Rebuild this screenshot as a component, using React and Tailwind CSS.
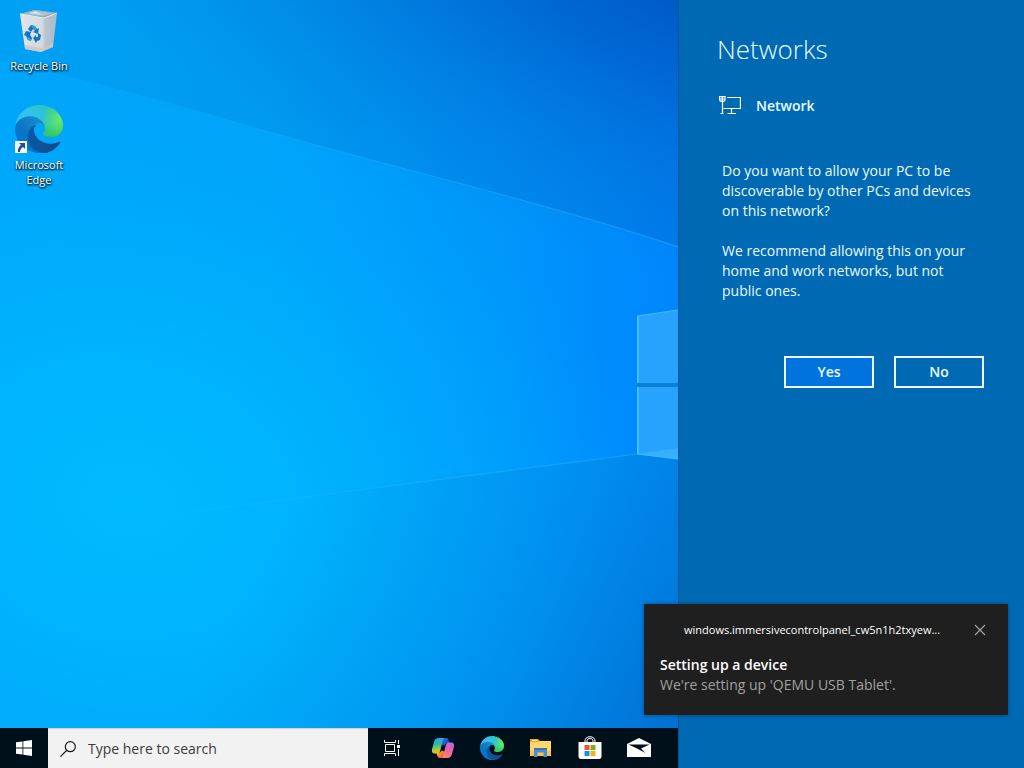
import React from "react";

function Wallpaper() {
  return (
    <svg
      className="absolute inset-0 h-full w-full"
      viewBox="0 0 678 768"
      preserveAspectRatio="xMaxYMid slice"
      aria-hidden="true"
    >
      <defs>
        <linearGradient id="wpBase" x1="0" y1="0" x2="678" y2="0" gradientUnits="userSpaceOnUse">
          <stop offset="0" stopColor="#00a6fa" />
          <stop offset="0.4" stopColor="#00a4f9" />
          <stop offset="0.75" stopColor="#0096fb" />
          <stop offset="1" stopColor="#0086fd" />
        </linearGradient>
        <radialGradient id="wpCyan" cx="0" cy="0" r="1" gradientUnits="userSpaceOnUse" gradientTransform="translate(130 500) rotate(12) scale(520 420)">
          <stop offset="0" stopColor="#00baff" />
          <stop offset="0.35" stopColor="#00b6fd" stopOpacity="0.85" />
          <stop offset="0.7" stopColor="#00aeff" stopOpacity="0.4" />
          <stop offset="1" stopColor="#00a6ff" stopOpacity="0" />
        </radialGradient>
        <radialGradient id="wpTop" cx="0" cy="0" r="1" gradientUnits="userSpaceOnUse" gradientTransform="translate(700 -10) rotate(16) scale(720 290)">
          <stop offset="0" stopColor="#0052c2" />
          <stop offset="0.3" stopColor="#0064d0" stopOpacity="0.85" />
          <stop offset="0.65" stopColor="#0078dc" stopOpacity="0.45" />
          <stop offset="1" stopColor="#0084e0" stopOpacity="0" />
        </radialGradient>
        <linearGradient id="wpShade" x1="0" y1="0" x2="678" y2="0" gradientUnits="userSpaceOnUse">
          <stop offset="0" stopColor="#0080d0" stopOpacity="0.15" />
          <stop offset="1" stopColor="#0060cc" stopOpacity="0.3" />
        </linearGradient>
        <linearGradient id="wpLow" x1="310" y1="470" x2="700" y2="690" gradientUnits="userSpaceOnUse">
          <stop offset="0" stopColor="#009ce8" stopOpacity="0" />
          <stop offset="0.5" stopColor="#008ee8" stopOpacity="0.55" />
          <stop offset="1" stopColor="#0070d2" />
        </linearGradient>
        <linearGradient id="wpRay" x1="120" y1="0" x2="678" y2="0" gradientUnits="userSpaceOnUse">
          <stop offset="0" stopColor="#3cc0ff" stopOpacity="0" />
          <stop offset="0.5" stopColor="#30b8ff" stopOpacity="0.35" />
          <stop offset="1" stopColor="#30b4ff" stopOpacity="0.5" />
        </linearGradient>
      </defs>
      <rect x="-2000" y="-1000" width="2678" height="2768" fill="#00a6fa" />
      <rect width="678" height="768" fill="url(#wpBase)" />
      <rect width="678" height="768" fill="url(#wpCyan)" />
      <rect width="678" height="768" fill="url(#wpTop)" />
      <path d="M0 60 Q120 88 207 114 T432 176 T678 247V0H0Z" fill="url(#wpShade)" />
      <path d="M0 535 637 454 678 459V768H0Z" fill="url(#wpLow)" />
      <path d="M80 80Q150 96 207 114 T432 176 T678 247" fill="none" stroke="url(#wpRay)" strokeWidth="1.2" />
      <path d="M120 521 637 454" fill="none" stroke="url(#wpRay)" strokeWidth="1.2" />
      <path d="M637 316 678 310V383H637Z" fill="#27a3fd" />
      <path d="M637 387H678V459L637 454Z" fill="#27a3fd" />
      <path d="M637 454 678 448V459Z" fill="#45b6ff" opacity=".6" />
      <path d="M637 383H678V387H637Z" fill="#0880d8" />
      <path d="M637.8 316V383M637.8 387V454" stroke="#44caff" strokeWidth="1.6" />
      <path d="M637 316 678 310M637 454 678 459" stroke="#40bcff" strokeWidth="1" />
    </svg>
  );
}

function RecycleBinIcon() {
  return (
    <svg className="h-12 w-12" viewBox="0 0 48 48" aria-hidden="true">
      <defs>
        <linearGradient id="binBody" x1="0" y1="0" x2="1" y2="0">
          <stop offset="0" stopColor="#dfe5ea" />
          <stop offset="0.6" stopColor="#d3dae0" />
          <stop offset="0.68" stopColor="#b9c5ce" />
          <stop offset="1" stopColor="#a9bac7" />
        </linearGradient>
      </defs>
      <path d="M5 8 20 4 42 7 38 41 26 46 10 43Z" fill="url(#binBody)" />
      <path d="M5 8 20 4 42 7 29 12Z" fill="#8fa9ba" />
      <path d="M9 8 20 5 38 7 28 10Z" fill="#b0c5d1" />
      <path d="M14 7 21 5 27 9Z" fill="#d3e0e7" />
      <path d="M5 8 29 12 42 7" fill="none" stroke="#e4edf1" strokeWidth="1" />
      <path d="M10 39 26 42 38 37 38 41 26 46 10 43Z" fill="#cfc4be" opacity=".8" />
      <g fill="#1275c4">
        <path d="M13 23 16 19 20 20 22 23 24 22 23 28 18 26 20 25 18 23 16 26Z" />
        <path d="M11 25 16 26 15 29 17 32 16 35 13 34 11 30 9 29Z" />
        <path d="M18 32 21 29 21 31 23 31 23 27 26 29 25 34 22 35 21 37Z" />
      </g>
      <path d="M16 19 20 20 22 23 20 24 17 21ZM11 30 13 34 16 35 16 33Z" fill="#38a2dc" />
    </svg>
  );
}

function EdgeLogo({ id, className }) {
  return (
    <svg className={className} viewBox="0 0 256 256" aria-hidden="true">
      <defs>
        <linearGradient id={id + "a"} x1="63" y1="177" x2="241" y2="177" gradientUnits="userSpaceOnUse">
          <stop offset="0" stopColor="#0c59a4" />
          <stop offset="1" stopColor="#114a8b" />
        </linearGradient>
        <linearGradient id={id + "b"} x1="146" y1="92" x2="43" y2="220" gradientUnits="userSpaceOnUse">
          <stop offset="0" stopColor="#1b8ad2" />
          <stop offset="0.16" stopColor="#1583cc" />
          <stop offset="0.67" stopColor="#0674c8" />
          <stop offset="1" stopColor="#0078d4" />
        </linearGradient>
        <radialGradient id={id + "c"} cx="0" cy="0" r="1" gradientUnits="userSpaceOnUse" gradientTransform="translate(26 47) rotate(92) scale(202 431)">
          <stop offset="0" stopColor="#35c1f1" />
          <stop offset="0.11" stopColor="#34c1ed" />
          <stop offset="0.23" stopColor="#2fc2df" />
          <stop offset="0.31" stopColor="#2bc3d2" />
          <stop offset="0.67" stopColor="#36c752" />
        </radialGradient>
        <radialGradient id={id + "d"} cx="240" cy="78" r="97" gradientUnits="userSpaceOnUse">
          <stop offset="0" stopColor="#66eb6e" />
          <stop offset="1" stopColor="#66eb6e" stopOpacity="0" />
        </radialGradient>
      </defs>
      <path fill={"url(#" + id + "a)"} d="M235.7 195.5a93.7 93.7 0 0 1-10.6 4.7 101.9 101.9 0 0 1-35.9 6.4c-47.3 0-88.5-32.5-88.5-74.3a31.5 31.5 0 0 1 16.4-27.3c-42.8 1.8-53.8 46.4-53.8 72.5 0 74 68.1 81.4 82.8 81.4 7.9 0 19.8-2.3 27-4.6l1.3-.4a128.3 128.3 0 0 0 66.6-52.8 4 4 0 0 0-5.3-5.6z" />
      <path fill={"url(#" + id + "b)"} d="M105.7 241.4a79.2 79.2 0 0 1-22.7-21.3 80.7 80.7 0 0 1 29.5-120c3.2-1.5 8.5-4.1 15.6-4a32.4 32.4 0 0 1 25.7 13 31.9 31.9 0 0 1 6.3 18.7c0-.2 24.5-79.6-80-79.6-43.9 0-80 41.7-80 78.2a130.2 130.2 0 0 0 12.1 56 128 128 0 0 0 156.4 67 75.5 75.5 0 0 1-62.8-8z" />
      <path fill={"url(#" + id + "c)"} d="M152.3 148.9c-.9 1-3.4 2.5-3.4 5.6 0 2.6 1.7 5.2 4.8 7.3 14.4 10 41.5 8.7 41.6 8.7a59.6 59.6 0 0 0 30.3-8.3 61.4 61.4 0 0 0 30.4-52.9c.3-22.4-8-37.3-11.3-43.9C223.5 23.9 177.7 0 128 0A128 128 0 0 0 0 126.2c.5-36.5 36.8-66 80-66 3.5 0 23.5.3 42 10a72.6 72.6 0 0 1 30.9 29.3c6.1 10.6 7.2 24.1 7.2 29.5s-2.7 13.3-7.8 19.9z" />
      <path fill={"url(#" + id + "d)"} d="M152.3 148.9c-.9 1-3.4 2.5-3.4 5.6 0 2.6 1.7 5.2 4.8 7.3 14.4 10 41.5 8.7 41.6 8.7a59.6 59.6 0 0 0 30.3-8.3 61.4 61.4 0 0 0 30.4-52.9c.3-22.4-8-37.3-11.3-43.9C223.5 23.9 177.7 0 128 0A128 128 0 0 0 0 126.2c.5-36.5 36.8-66 80-66 3.5 0 23.5.3 42 10a72.6 72.6 0 0 1 30.9 29.3c6.1 10.6 7.2 24.1 7.2 29.5s-2.7 13.3-7.8 19.9z" />
    </svg>
  );
}

function DesktopIcon({ label, children }) {
  return (
    <button
      type="button"
      className="flex w-[76px] flex-col items-center px-1 text-center text-[11px] leading-[15px] font-medium text-white [text-shadow:0_1px_2px_#000,1px_1px_2px_#000c]"
    >
      {children}
      <span className="mt-1">{label}</span>
    </button>
  );
}

function WindowsIcon() {
  return (
    <svg className="h-4 w-4" viewBox="0 0 16 16" fill="#fff" aria-hidden="true">
      <path d="M0 2.3 6.5 1.4V7.6H0ZM7.3 1.3 16 0V7.6H7.3ZM0 8.4H6.5V14.6L0 13.7ZM7.3 8.4H16V16L7.3 14.7Z" />
    </svg>
  );
}

function SearchIcon() {
  return (
    <svg className="h-4 w-4 shrink-0" viewBox="0 0 16 16" fill="none" stroke="#1c1c1c" strokeWidth="1.2" aria-hidden="true">
      <circle cx="10.3" cy="5.7" r="5" />
      <path d="M6.8 9.3.4 15.6" />
    </svg>
  );
}

function TaskViewIcon() {
  return (
    <svg className="h-4 w-4" viewBox="0 0 16 16" fill="none" stroke="#fff" strokeWidth="1" aria-hidden="true">
      <path d="M.5 0V2.5H11.5V0M.5 16V13.5H11.5V16M1.5 4.5H10.5V11.5H1.5ZM14.5 0V4M14.5 9V16" />
      <path d="M13 5H16V8H13Z" fill="#fff" stroke="none" />
    </svg>
  );
}

function CopilotIcon() {
  return (
    <svg className="h-6 w-6" viewBox="0 0 24 24" aria-hidden="true">
      <defs>
        <linearGradient id="coL" x1="4" y1="2" x2="6" y2="18" gradientUnits="userSpaceOnUse">
          <stop offset="0" stopColor="#22a7f2" />
          <stop offset="0.4" stopColor="#2bb7b0" />
          <stop offset="0.7" stopColor="#a5c63c" />
          <stop offset="1" stopColor="#f7c320" />
        </linearGradient>
        <linearGradient id="coR" x1="20" y1="6" x2="12" y2="22" gradientUnits="userSpaceOnUse">
          <stop offset="0" stopColor="#a66cf0" />
          <stop offset="0.45" stopColor="#ec5fa8" />
          <stop offset="1" stopColor="#ff8a62" />
        </linearGradient>
        <linearGradient id="coT" x1="11" y1="2" x2="18" y2="7" gradientUnits="userSpaceOnUse">
          <stop offset="0" stopColor="#2277e6" />
          <stop offset="1" stopColor="#2446b8" />
        </linearGradient>
        <linearGradient id="coB" x1="6" y1="16" x2="12" y2="22" gradientUnits="userSpaceOnUse">
          <stop offset="0" stopColor="#ffb02e" />
          <stop offset="1" stopColor="#f0533d" />
        </linearGradient>
      </defs>
      <path d="M8 2H15C17 2 17.500 3.500 18 5L18.600 7.500H16C14.500 7.500 13.800 8.500 13.500 9.500L9 8Z" fill="url(#coT)" />
      <path d="M16 22H9C7 22 6.500 20.500 6 19L5.400 16.500H8C9.500 16.500 10.200 15.500 10.500 14.500L15 16Z" fill="url(#coB)" />
      <path d="M8 2H13.500C12.300 2.600 11.900 4 11.400 6L9.400 14C8.900 16 8 17.500 6 17.500H3.500C1 17.500 .5 15 1.200 12.500L3 6C3.700 3.500 5 2 8 2Z" fill="url(#coL)" />
      <path d="M16 22H10.500C11.700 21.400 12.100 20 12.600 18L14.600 10C15.100 8 16 6.500 18 6.500H20.500C23 6.500 23.500 9 22.800 11.500L21 18C20.300 20.500 19 22 16 22Z" fill="url(#coR)" />
    </svg>
  );
}

function ExplorerIcon() {
  return (
    <svg className="h-6 w-6" viewBox="0 0 24 24" aria-hidden="true">
      <path d="M1 3H9L11 5H22V20H1Z" fill="#e9a823" />
      <path d="M1 6H9L11 5H22V20H1Z" fill="#ffd66b" />
      <path d="M3 4H8V5H3Z" fill="#fff1b8" />
      <path d="M1 15H22V20H1Z" fill="#f8c54c" />
      <path d="M5 21V13C5 12.400 5.400 12 6 12H17C17.600 12 18 12.400 18 13V21H14.500V16.500H8.500V21Z" fill="#4a8fd6" />
      <path d="M5 12H18V14H5Z" fill="#3376c0" />
    </svg>
  );
}

function StoreIcon() {
  return (
    <svg className="h-6 w-6" viewBox="0 0 24 24" aria-hidden="true">
      <path d="M7 7V5C7 2.500 9 .7 12 .7S17 2.500 17 5V7M9 7V5C9 3.500 10 2.500 12 2.500S15 3.500 15 5V7" fill="none" stroke="#fff" strokeWidth="1" />
      <path d="M.5 6H23.500V20.500C23.500 22 22.500 23 21 23H3C1.500 23 .5 22 .5 20.500Z" fill="#fff" />
      <path d="M6.500 9H11.500V14H6.500Z" fill="#e8542c" />
      <path d="M12.500 9H17.500V14H12.500Z" fill="#7fae1c" />
      <path d="M6.500 15H11.500V20H6.500Z" fill="#1694dc" />
      <path d="M12.500 15H17.500V20H12.500Z" fill="#f5b011" />
    </svg>
  );
}

function MailIcon() {
  return (
    <svg className="h-6 w-6" viewBox="0 0 24 24" aria-hidden="true">
      <path d="M0 8 12 2 24 8V21H0Z" fill="#fff" />
      <path d="M1.500 8.500H22.500L14 12.500 18.500 17 10 12.500Z" fill="#00101a" />
    </svg>
  );
}

function NetworkIcon() {
  return (
    <svg className="h-[22px] w-[22px] shrink-0" viewBox="0 0 22 22" fill="none" stroke="#fff" strokeWidth="1.200" aria-hidden="true">
      <path d="M8 2.500H21.400V13.500H4.500M12.500 13.500V18.500M8.500 18.500H17" />
      <path d="M.6 1V4.500C.6 6 1.500 6.500 3.300 6.500S6 6 6 4.500V1M3.300 1V6.500M.6 1.600H6M3.500 6.500V19M1.500 18.500H4.500M.6 4H6" />
    </svg>
  );
}

function TaskButton({ label, children }) {
  return (
    <button type="button" aria-label={label} className="flex h-10 w-[49px] items-center justify-center">
      {children}
    </button>
  );
}

function Taskbar() {
  return (
    <nav aria-label="Taskbar" className="relative flex h-10 items-center bg-[#00101a]">
      <button type="button" aria-label="Start" className="flex h-10 w-12 items-center justify-center">
        <WindowsIcon />
      </button>
      <label className="flex h-10 w-80 items-center gap-3 border-t border-[#d2d6d8] bg-[#f2f2f2] px-3">
        <SearchIcon />
        <input
          type="text"
          aria-label="Type here to search"
          placeholder="Type here to search"
          className="min-w-0 flex-1 bg-transparent text-sm text-[#333] outline-none placeholder:text-[#3c3c3c]"
        />
      </label>
      <button type="button" aria-label="Task View" className="mr-0.5 flex h-10 w-12 items-center justify-center">
        <TaskViewIcon />
      </button>
      <TaskButton label="Copilot"><CopilotIcon /></TaskButton>
      <TaskButton label="Microsoft Edge"><EdgeLogo id="edgeBar" className="h-6 w-6" /></TaskButton>
      <TaskButton label="File Explorer"><ExplorerIcon /></TaskButton>
      <TaskButton label="Microsoft Store"><StoreIcon /></TaskButton>
      <TaskButton label="Mail"><MailIcon /></TaskButton>
    </nav>
  );
}

function NetworkPanel() {
  return (
    <aside className="w-[346px] shrink-0 border-l border-[#00559c] bg-[#0069b4] pr-10 pl-[38px] text-[#eafaff]">
      <h1 className="pt-[31px] text-[26px] leading-9 font-light">Networks</h1>
      <div className="mt-7 flex items-center gap-[15px] pl-0.5">
        <NetworkIcon />
        <h2 className="text-sm leading-5 font-semibold">Network</h2>
      </div>
      <div className="mt-11 space-y-5 pl-[5px] text-sm leading-5">
        <p>
          Do you want to allow your PC to be<br />
          discoverable by other PCs and devices<br />
          on this network?
        </p>
        <p>
          We recommend allowing this on your<br />
          home and work networks, but not<br />
          public ones.
        </p>
      </div>
      <div className="mt-[55px] flex justify-end gap-5 text-sm font-semibold">
        <button type="button" className="h-8 w-[90px] border-2 border-[#eafaff] bg-[#0073de]">Yes</button>
        <button type="button" className="h-8 w-[90px] border-2 border-[#eafaff]">No</button>
      </div>
    </aside>
  );
}

function Toast() {
  return (
    <section
      role="status"
      className="absolute right-4 bottom-[53px] w-[364px] bg-[#1f1f1f] px-4 pt-4 pb-5 text-sm leading-5 shadow-[0_0_4px_#0006]"
    >
      <header className="flex items-center justify-between pr-[5px] pl-6">
        <span className="text-[11px] text-white">windows.immersivecontrolpanel_cw5n1h2txyew...</span>
        <button type="button" aria-label="Close" className="p-px">
          <svg className="h-3 w-3" viewBox="0 0 12 12" stroke="#a8a8a8" strokeWidth="1.100" aria-hidden="true">
            <path d="M1 1 11 11M11 1 1 11" />
          </svg>
        </button>
      </header>
      <h2 className="mt-[15px] font-semibold text-white">Setting up a device</h2>
      <p className="text-[#a0a0a0]">We're setting up 'QEMU USB Tablet'.</p>
    </section>
  );
}

export default function App() {
  return (
    <div className="relative flex min-h-screen overflow-hidden font-['Open_Sans','Noto_Sans',sans-serif]">
      <main className="relative flex min-w-0 flex-1 flex-col justify-between overflow-hidden bg-[#00a6fa]">
        <Wallpaper />
        <div className="relative flex flex-col gap-8 pt-1.5 pl-px">
          <DesktopIcon label="Recycle Bin">
            <RecycleBinIcon />
          </DesktopIcon>
          <DesktopIcon label="Microsoft Edge">
            <span className="relative">
              <EdgeLogo id="edgeDesk" className="h-12 w-12" />
              <svg className="absolute bottom-0 left-0 h-3 w-3" viewBox="0 0 12 12" aria-hidden="true">
                <path d="M0 0H12V12H0Z" fill="#f4f6f8" />
                <path d="M4 2H10V8L8 6C6 7.500 5 8.500 5 11H3C2.500 8 4 5.500 6 4Z" fill="#1c4f94" />
              </svg>
            </span>
          </DesktopIcon>
        </div>
        <Taskbar />
      </main>
      <NetworkPanel />
      <Toast />
    </div>
  );
}
